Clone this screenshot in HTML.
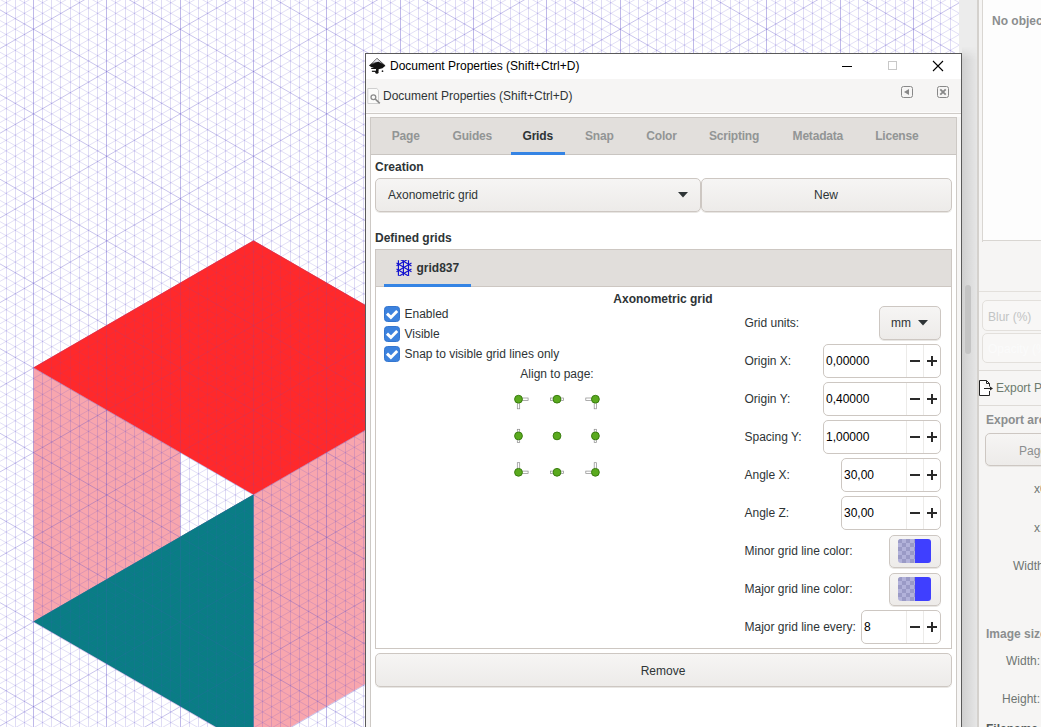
<!DOCTYPE html>
<html><head><meta charset="utf-8"><style>
*{margin:0;padding:0;box-sizing:border-box}
html,body{width:1041px;height:727px;overflow:hidden;background:#fff;font-family:"Liberation Sans",sans-serif;font-size:12px;color:#2e3436}
.a{position:absolute}
.t{position:absolute;line-height:12px;white-space:nowrap}
.b{font-weight:bold}
.c{transform:translateX(-50%)}
.btn{position:absolute;border:1px solid #cdc7c2;border-radius:5px;background:linear-gradient(#f6f5f4,#edebe9);box-shadow:0 1px #e8e6e3}
.ent{position:absolute;border:1px solid #cdc7c2;border-radius:5px;background:#fff}
.sep{position:absolute;top:1px;bottom:1px;width:1px;background:#ebe8e5}
.tab{position:absolute;line-height:12px;white-space:nowrap;font-weight:bold;color:#929595;transform:translateX(-50%);letter-spacing:-0.2px}
.lbl{position:absolute;line-height:12px;white-space:nowrap;color:#8b8e8f}
</style></head><body>
<div style="position:absolute;left:0;top:0;width:959px;height:727px;"><svg width="959" height="727" style="position:absolute;left:0;top:0">
<rect width="959" height="727" fill="#fff"/>
<polygon points="33.50,367.40 253.50,494.42 253.50,748.46 33.50,621.44" fill="#f8a6ae"/>
<polygon points="253.50,494.42 473.50,367.40 473.50,621.44 253.50,748.46" fill="#f8a6ae"/>
<polygon points="180.17,452.08 253.50,494.42 180.17,536.76" fill="#ffffff"/>
<polygon points="33.50,621.44 253.50,494.42 253.50,748.46" fill="#0a7d86"/>
<polygon points="253.50,240.38 473.50,367.40 253.50,494.42 33.50,367.40" fill="#ff2a2c"/>

<g>
<path d="M0 -551.15L959 2.55M0 -540.56L959 13.13M0 -529.98L959 23.72M0 -519.39L959 34.30M0 -508.81L959 44.89M0 -487.64L959 66.06M0 -477.05L959 76.64M0 -466.47L959 87.23M0 -455.88L959 97.81M0 -445.30L959 108.40M0 -434.71L959 118.98M0 -424.13L959 129.57M0 -402.96L959 150.74M0 -392.37L959 161.32M0 -381.79L959 171.91M0 -371.20L959 182.49M0 -360.62L959 193.08M0 -350.03L959 203.66M0 -339.45L959 214.25M0 -318.28L959 235.42M0 -307.69L959 246.00M0 -297.11L959 256.59M0 -286.52L959 267.17M0 -275.94L959 277.76M0 -265.35L959 288.34M0 -254.77L959 298.93M0 -233.60L959 320.10M0 -223.01L959 330.68M0 -212.43L959 341.27M0 -201.84L959 351.85M0 -191.26L959 362.44M0 -180.67L959 373.02M0 -170.09L959 383.61M0 -148.92L959 404.78M0 -138.33L959 415.36M0 -127.75L959 425.95M0 -117.16L959 436.53M0 -106.58L959 447.12M0 -95.99L959 457.70M0 -85.41L959 468.29M0 -64.24L959 489.46M0 -53.65L959 500.04M0 -43.07L959 510.63M0 -32.48L959 521.21M0 -21.90L959 531.80M0 -11.31L959 542.38M0 -0.73L959 552.97M0 20.44L959 574.14M0 31.03L959 584.72M0 41.61L959 595.31M0 52.20L959 605.89M0 62.78L959 616.48M0 73.37L959 627.06M0 83.95L959 637.65M0 105.12L959 658.82M0 115.71L959 669.40M0 126.29L959 679.99M0 136.88L959 690.57M0 147.46L959 701.16M0 158.05L959 711.74M0 168.63L959 722.33M0 189.80L959 743.50M0 200.39L959 754.08M0 210.97L959 764.67M0 221.56L959 775.25M0 232.14L959 785.84M0 242.73L959 796.42M0 253.31L959 807.01M0 274.48L959 828.18M0 285.07L959 838.76M0 295.65L959 849.35M0 306.24L959 859.93M0 316.82L959 870.52M0 327.41L959 881.10M0 337.99L959 891.69M0 359.16L959 912.86M0 369.75L959 923.44M0 380.33L959 934.03M0 390.92L959 944.61M0 401.50L959 955.20M0 412.09L959 965.78M0 422.67L959 976.37M0 443.84L959 997.54M0 454.43L959 1008.12M0 465.01L959 1018.71M0 475.60L959 1029.29M0 486.18L959 1039.88M0 496.77L959 1050.46M0 507.35L959 1061.05M0 528.52L959 1082.22M0 539.11L959 1092.80M0 549.69L959 1103.39M0 560.28L959 1113.97M0 570.86L959 1124.56M0 581.45L959 1135.14M0 592.03L959 1145.73M0 613.20L959 1166.90M0 623.79L959 1177.48M0 634.37L959 1188.07M0 644.96L959 1198.65M0 655.54L959 1209.24M0 666.13L959 1219.82M0 676.71L959 1230.41M0 697.88L959 1251.58M0 708.47L959 1262.16M0 719.05L959 1272.75M0 6.20L959 -547.49M0 16.79L959 -536.91M0 27.37L959 -526.32M0 37.96L959 -515.74M0 59.13L959 -494.57M0 69.71L959 -483.98M0 80.30L959 -473.40M0 90.88L959 -462.81M0 101.47L959 -452.23M0 112.05L959 -441.64M0 122.64L959 -431.06M0 143.81L959 -409.89M0 154.39L959 -399.30M0 164.98L959 -388.72M0 175.56L959 -378.13M0 186.15L959 -367.55M0 196.73L959 -356.96M0 207.32L959 -346.38M0 228.49L959 -325.21M0 239.07L959 -314.62M0 249.66L959 -304.04M0 260.24L959 -293.45M0 270.83L959 -282.87M0 281.41L959 -272.28M0 292.00L959 -261.70M0 313.17L959 -240.53M0 323.75L959 -229.94M0 334.34L959 -219.36M0 344.92L959 -208.77M0 355.51L959 -198.19M0 366.09L959 -187.60M0 376.68L959 -177.02M0 397.85L959 -155.85M0 408.43L959 -145.26M0 419.02L959 -134.68M0 429.60L959 -124.09M0 440.19L959 -113.51M0 450.77L959 -102.92M0 461.36L959 -92.34M0 482.53L959 -71.17M0 493.11L959 -60.58M0 503.70L959 -50.00M0 514.28L959 -39.41M0 524.87L959 -28.83M0 535.45L959 -18.24M0 546.04L959 -7.66M0 567.21L959 13.51M0 577.79L959 24.10M0 588.38L959 34.68M0 598.96L959 45.27M0 609.55L959 55.85M0 620.13L959 66.44M0 630.72L959 77.02M0 651.89L959 98.19M0 662.47L959 108.78M0 673.06L959 119.36M0 683.64L959 129.95M0 694.23L959 140.53M0 704.81L959 151.12M0 715.40L959 161.70M0 736.57L959 182.87M0 747.15L959 193.46M0 757.74L959 204.04M0 768.32L959 214.63M0 778.91L959 225.21M0 789.49L959 235.80M0 800.08L959 246.38M0 821.25L959 267.55M0 831.83L959 278.14M0 842.42L959 288.72M0 853.00L959 299.31M0 863.59L959 309.89M0 874.17L959 320.48M0 884.76L959 331.06M0 905.93L959 352.23M0 916.51L959 362.82M0 927.10L959 373.40M0 937.68L959 383.99M0 948.27L959 394.57M0 958.85L959 405.16M0 969.44L959 415.74M0 990.61L959 436.91M0 1001.19L959 447.50M0 1011.78L959 458.08M0 1022.36L959 468.67M0 1032.95L959 479.25M0 1043.53L959 489.84M0 1054.12L959 500.42M0 1075.29L959 521.59M0 1085.87L959 532.18M0 1096.46L959 542.76M0 1107.04L959 553.35M0 1117.63L959 563.93M0 1128.21L959 574.52M0 1138.80L959 585.10M0 1159.97L959 606.27M0 1170.55L959 616.86M0 1181.14L959 627.44M0 1191.72L959 638.03M0 1202.31L959 648.61M0 1212.89L959 659.20M0 1223.48L959 669.78M0 1244.65L959 690.95M0 1255.23L959 701.54M0 1265.82L959 712.12M0 1276.40L959 722.71" stroke="rgb(95,80,205)" stroke-opacity="0.18" stroke-width="1" fill="none"/>
<path d="M6.50 0V727M15.50 0V727M24.50 0V727M42.50 0V727M51.50 0V727M60.50 0V727M70.50 0V727M79.50 0V727M88.50 0V727M97.50 0V727M115.50 0V727M125.50 0V727M134.50 0V727M143.50 0V727M152.50 0V727M161.50 0V727M170.50 0V727M189.50 0V727M198.50 0V727M207.50 0V727M216.50 0V727M225.50 0V727M235.50 0V727M244.50 0V727M262.50 0V727M271.50 0V727M280.50 0V727M290.50 0V727M299.50 0V727M308.50 0V727M317.50 0V727M335.50 0V727M345.50 0V727M354.50 0V727M363.50 0V727M372.50 0V727M381.50 0V727M390.50 0V727M409.50 0V727M418.50 0V727M427.50 0V727M436.50 0V727M445.50 0V727M455.50 0V727M464.50 0V727M482.50 0V727M491.50 0V727M500.50 0V727M510.50 0V727M519.50 0V727M528.50 0V727M537.50 0V727M555.50 0V727M565.50 0V727M574.50 0V727M583.50 0V727M592.50 0V727M601.50 0V727M610.50 0V727M629.50 0V727M638.50 0V727M647.50 0V727M656.50 0V727M665.50 0V727M675.50 0V727M684.50 0V727M702.50 0V727M711.50 0V727M720.50 0V727M730.50 0V727M739.50 0V727M748.50 0V727M757.50 0V727M775.50 0V727M785.50 0V727M794.50 0V727M803.50 0V727M812.50 0V727M821.50 0V727M830.50 0V727M849.50 0V727M858.50 0V727M867.50 0V727M876.50 0V727M885.50 0V727M895.50 0V727M904.50 0V727M922.50 0V727M931.50 0V727M940.50 0V727M950.50 0V727M959.50 0V727" stroke="rgb(95,80,205)" stroke-opacity="0.2" stroke-width="1" fill="none"/>
<path d="M0 -498.22L959 55.47M0 -413.54L959 140.15M0 -328.86L959 224.83M0 -244.18L959 309.51M0 -159.50L959 394.19M0 -74.82L959 478.87M0 9.86L959 563.55M0 94.54L959 648.23M0 179.22L959 732.91M0 263.90L959 817.59M0 348.58L959 902.27M0 433.26L959 986.95M0 517.94L959 1071.63M0 602.62L959 1156.31M0 687.30L959 1240.99M0 48.54L959 -505.15M0 133.22L959 -420.47M0 217.90L959 -335.79M0 302.58L959 -251.11M0 387.26L959 -166.43M0 471.94L959 -81.75M0 556.62L959 2.93M0 641.30L959 87.61M0 725.98L959 172.29M0 810.66L959 256.97M0 895.34L959 341.65M0 980.02L959 426.33M0 1064.70L959 511.01M0 1149.38L959 595.69M0 1234.06L959 680.37" stroke="rgb(95,80,200)" stroke-opacity="0.34" stroke-width="1" fill="none"/>
<path d="M33.50 0V727M106.50 0V727M180.50 0V727M253.50 0V727M326.50 0V727M400.50 0V727M473.50 0V727M546.50 0V727M620.50 0V727M693.50 0V727M766.50 0V727M840.50 0V727M913.50 0V727" stroke="rgb(95,80,200)" stroke-opacity="0.4" stroke-width="1" fill="none"/></g>
<polygon points="33.50,621.44 253.50,494.42 253.50,748.46" fill="#0a7d86" fill-opacity="0.6"/>
<polygon points="253.50,240.38 473.50,367.40 253.50,494.42 33.50,367.40" fill="#ff2a2c" fill-opacity="0.6"/>

</svg></div>
<!-- canvas scrollbar strip -->
<div class="a" style="left:959px;top:0;width:18px;height:727px;background:#ececec"></div>
<div class="a" style="left:962px;top:47px;width:15px;height:680px;background:linear-gradient(90deg,#d0d0d0,#e6e6e6);-webkit-mask-image:linear-gradient(to bottom,transparent,#000 12px)"></div>
<div class="a" style="left:965px;top:285px;width:6px;height:69px;border-radius:3px;background:#c4c4c4"></div>
<!-- right dock -->
<div class="a" style="left:977px;top:0;width:64px;height:727px;background:#f6f5f4"></div>
<div class="a" style="left:977px;top:0;width:2px;height:727px;background:#d4d1cd"></div>
<div class="a" style="left:982px;top:0;width:1px;height:242px;background:#d9d6d2"></div>
<div class="a" style="left:983px;top:0;width:58px;height:241px;background:#fdfdfd;border-bottom:1px solid #d9d6d2"></div>
<div class="t b" style="left:992px;top:15px;color:#8b8e8f">No objects selected</div>
<div class="a" style="left:979px;top:291px;width:62px;height:1px;background:#e3e0dc"></div>
<div class="ent" style="left:982px;top:300px;width:70px;height:31px;background:#f8f7f6;border-color:#e3e0dc"></div>
<div class="t" style="left:988px;top:311px;color:#c2c4c4">Blur (%)</div>
<div class="ent" style="left:982px;top:333px;width:70px;height:30px;background:#f8f7f6;border-color:#e3e0dc"></div>
<div class="t" style="left:988px;top:343px;color:#fbfbfb">Opacity (%)</div>
<div class="a" style="left:979px;top:370px;width:62px;height:1px;background:#dedbd7"></div>
<svg class="a" style="left:978px;top:380px" width="16" height="16" viewBox="0 0 16 16"><path d="M1.5 0.5h7l3 3v3M11.5 11v4.5h-10v-15" fill="#fff" stroke="#222" stroke-width="1"/><path d="M8.5 0.5v3h3" fill="none" stroke="#222"/><path d="M6 8.5h8" stroke="#222"/><path d="M12 6.5l3 2-3 2z" fill="#222"/></svg>
<div class="t" style="left:996px;top:382px;color:#6d7b6e">Export PNG Image</div>
<div class="a" style="left:979px;top:405px;width:62px;height:1px;background:#dedbd7"></div>
<div class="t b" style="left:986px;top:414px;color:#8b8e8f">Export area</div>
<div class="btn" style="left:985px;top:433px;width:70px;height:33px"></div>
<div class="t" style="left:1019px;top:445px;color:#8b8e8f">Page</div>
<div class="t" style="left:1034px;top:483px;color:#6f7573">x0</div>
<div class="t" style="left:1034px;top:522px;color:#6f7573">x1</div>
<div class="t" style="left:1013px;top:560px;color:#6f7573">Width:</div>
<div class="t b" style="left:986px;top:628px;color:#8b8e8f">Image size</div>
<div class="t" style="left:1006px;top:655px;color:#6f7573">Width:</div>
<div class="t" style="left:1002px;top:693px;color:#6f7573">Height:</div>
<div class="t b" style="left:986px;top:723px;color:#555b5a">Filename</div>

<!-- dialog -->
<div class="a" style="left:365px;top:53px;width:597px;height:700px;background:#f6f5f4;border:1px solid #5a5a5a"></div>
<div class="a" style="left:366px;top:54px;width:595px;height:25px;background:#fff"></div>
<svg class="a" style="left:366px;top:55px" width="24" height="24" viewBox="0 0 24 24">
<defs><linearGradient id="ig" x1="0" y1="0" x2="0" y2="1"><stop offset="0" stop-color="#fff"/><stop offset="0.35" stop-color="#d8d8e0"/><stop offset="0.6" stop-color="#222"/><stop offset="1" stop-color="#111"/></linearGradient></defs>
<path d="M11 3.3L3.3 10.6 5 12 10 12.8 14 13 17 12 19.2 10.7z" fill="url(#ig)"/>
<path d="M11 3.3L3.3 10.6" stroke="#1a1a1a" stroke-width="0.9" stroke-dasharray="0.9 0.7" fill="none"/>
<path d="M11 3.3L19.2 10.7" stroke="#2a2a2a" stroke-width="0.7" fill="none"/>
<path d="M4.8 11.2L9.5 7.5 12.5 6.8 19.2 10.7 16.5 13.3 12.5 14.2 9 13.6z" fill="#121212"/>
<rect x="5.2" y="12.8" width="5" height="1.2" fill="#111"/>
<rect x="5.9" y="15.7" width="4.8" height="1.2" fill="#111"/>
<circle cx="10.9" cy="17.2" r="1.6" fill="#111"/>
<rect x="10" y="13.5" width="2.6" height="3" fill="#111"/>
<circle cx="16.5" cy="16.2" r="0.85" fill="#222"/>
</svg>
<div class="t" style="left:390px;top:60px;color:#000">Document Properties (Shift+Ctrl+D)</div>
<div class="a" style="left:842px;top:66px;width:10px;height:1px;background:#000"></div>
<div class="a" style="left:888px;top:61px;width:9px;height:9px;border:1px solid #c8c8c8"></div>
<svg class="a" style="left:932px;top:60px" width="12" height="12" viewBox="0 0 12 12"><path d="M1 1L11 11M11 1L1 11" stroke="#000" stroke-width="1.1"/></svg>

<svg class="a" style="left:364px;top:84px" width="24" height="24" viewBox="0 0 24 24">
<path d="M3.8 4.5h9l1.7 1.7v13.3h-10.7z" fill="#fbfbfa" stroke="#cfcfcf" stroke-width="1"/>
<circle cx="9.4" cy="13.2" r="2.4" fill="none" stroke="#8c8c8c" stroke-width="1.3"/>
<path d="M11.2 15l4.6 4.4" stroke="#8c8c8c" stroke-width="1.7"/>
</svg>
<div class="t" style="left:383px;top:90px;color:#2e3436">Document Properties (Shift+Ctrl+D)</div>
<svg class="a" style="left:901px;top:86px" width="12" height="12" viewBox="0 0 12 12"><rect x="0.5" y="0.5" width="11" height="11" rx="2" fill="none" stroke="#888"/><path d="M3 6l5-3v6z" fill="#888"/></svg>
<svg class="a" style="left:937px;top:86px" width="12" height="12" viewBox="0 0 12 12"><rect x="0.5" y="0.5" width="11" height="11" rx="2" fill="none" stroke="#888"/><path d="M3.3 3.3l5.4 5.4M8.7 3.3l-5.4 5.4" stroke="#888" stroke-width="1.8"/></svg>
<div class="a" style="left:366px;top:112px;width:595px;height:5px;background:#fcfbfa;border-top:1px solid #fcfbfa"></div><div class="a" style="left:366px;top:113px;width:595px;height:1px;background:#cfcbc7"></div>

<!-- outer notebook -->
<div class="a" style="left:370px;top:117px;width:587px;height:620px;background:#fff;border:1px solid #cdc9c5"></div>
<div class="a" style="left:371px;top:118px;width:585px;height:37px;background:#e2dfdc;border-bottom:1px solid #c9c5c1"></div>
<div class="tab" style="left:405.7px;top:130px">Page</div>
<div class="tab" style="left:472.3px;top:130px">Guides</div>
<div class="tab" style="left:537.7px;top:130px;color:#2e3436">Grids</div>
<div class="tab" style="left:599.3px;top:130px">Snap</div>
<div class="tab" style="left:661.5px;top:130px">Color</div>
<div class="tab" style="left:734px;top:130px">Scripting</div>
<div class="tab" style="left:817.8px;top:130px">Metadata</div>
<div class="tab" style="left:896.8px;top:130px">License</div>
<div class="a" style="left:511px;top:152px;width:54px;height:3px;background:#3584e4"></div>

<div class="t b" style="left:375px;top:161px">Creation</div>
<div class="btn" style="left:375px;top:178px;width:326px;height:34px"></div>
<div class="t" style="left:388px;top:189px">Axonometric grid</div>
<svg class="a" style="left:678px;top:192px" width="10" height="6" viewBox="0 0 10 6"><path d="M0 0h10L5 5.5z" fill="#2e3436"/></svg>
<div class="btn" style="left:701px;top:178px;width:251px;height:34px"></div>
<div class="t c" style="left:826px;top:189px">New</div>
<div class="t b" style="left:375px;top:232px">Defined grids</div>

<!-- inner notebook -->
<div class="a" style="left:375px;top:249px;width:577px;height:400px;background:#fff;border:1px solid #cdc7c2"></div>
<div class="a" style="left:376px;top:250px;width:575px;height:37px;background:#e1dedb;border-bottom:1px solid #cdc7c2"></div>
<svg class="a" style="left:396px;top:260px" width="16" height="16" viewBox="0 0 16 16">
<defs><clipPath id="gc"><rect x="0" y="0" width="16" height="16"/></clipPath></defs>
<g stroke="#1010d0" stroke-width="1.15" fill="none" clip-path="url(#gc)">
<path d="M2.4 0.3V15.8M7.4 0.3V15.8M12.5 0.3V15.8"/>
<path d="M0.5 3.1L15.5 11.8M0.5 -2.8L15.5 5.9M0.5 9L15.5 17.7"/>
<path d="M0.5 11.7L15.5 3M0.5 5.8L15.5 -2.9M0.5 17.6L15.5 8.9"/>
</g></svg>
<div class="t b" style="left:416.5px;top:262px">grid837</div>
<div class="a" style="left:384px;top:284px;width:87px;height:3px;background:#3584e4"></div>

<!-- checkboxes -->
<svg class="a" style="left:384px;top:306px" width="16" height="16" viewBox="0 0 16 16"><rect x="0.5" y="0.5" width="15" height="15" rx="3" fill="#3c82de" stroke="#3476cf"/><path d="M3 7.6L6.9 11.4 13.2 5" fill="none" stroke="#fff" stroke-width="2.9"/></svg><div class="t" style="left:404.5px;top:308px">Enabled</div><svg class="a" style="left:384px;top:326px" width="16" height="16" viewBox="0 0 16 16"><rect x="0.5" y="0.5" width="15" height="15" rx="3" fill="#3c82de" stroke="#3476cf"/><path d="M3 7.6L6.9 11.4 13.2 5" fill="none" stroke="#fff" stroke-width="2.9"/></svg><div class="t" style="left:404.5px;top:328px">Visible</div><svg class="a" style="left:384px;top:346px" width="16" height="16" viewBox="0 0 16 16"><rect x="0.5" y="0.5" width="15" height="15" rx="3" fill="#3c82de" stroke="#3476cf"/><path d="M3 7.6L6.9 11.4 13.2 5" fill="none" stroke="#fff" stroke-width="2.9"/></svg><div class="t" style="left:404.5px;top:348px">Snap to visible grid lines only</div><svg class="a" style="left:0;top:0" width="1041" height="727"><rect x="521.5" y="398.0" width="6.6" height="2.4" fill="#fff" stroke="#8a8a8a" stroke-width="0.7"/><rect x="517.3" y="402.2" width="2.4" height="6.6" fill="#fff" stroke="#8a8a8a" stroke-width="0.7"/><circle cx="518.5" cy="399.2" r="3.9" fill="#5aaa1e" stroke="#3a7d10" stroke-width="1"/><rect x="550.4" y="398.0" width="3.6" height="2.4" fill="#fff" stroke="#8a8a8a" stroke-width="0.7"/><rect x="560.0" y="398.0" width="3.6" height="2.4" fill="#fff" stroke="#8a8a8a" stroke-width="0.7"/><circle cx="557.0" cy="399.2" r="3.9" fill="#5aaa1e" stroke="#3a7d10" stroke-width="1"/><rect x="585.8" y="398.0" width="6.6" height="2.4" fill="#fff" stroke="#8a8a8a" stroke-width="0.7"/><rect x="594.2" y="402.2" width="2.4" height="6.6" fill="#fff" stroke="#8a8a8a" stroke-width="0.7"/><circle cx="595.4" cy="399.2" r="3.9" fill="#5aaa1e" stroke="#3a7d10" stroke-width="1"/><rect x="517.3" y="429.3" width="2.4" height="3.6" fill="#fff" stroke="#8a8a8a" stroke-width="0.7"/><rect x="517.3" y="438.9" width="2.4" height="3.6" fill="#fff" stroke="#8a8a8a" stroke-width="0.7"/><circle cx="518.5" cy="435.9" r="3.9" fill="#5aaa1e" stroke="#3a7d10" stroke-width="1"/><circle cx="557.0" cy="435.9" r="3.9" fill="#5aaa1e" stroke="#3a7d10" stroke-width="1"/><rect x="594.2" y="429.3" width="2.4" height="3.6" fill="#fff" stroke="#8a8a8a" stroke-width="0.7"/><rect x="594.2" y="438.9" width="2.4" height="3.6" fill="#fff" stroke="#8a8a8a" stroke-width="0.7"/><circle cx="595.4" cy="435.9" r="3.9" fill="#5aaa1e" stroke="#3a7d10" stroke-width="1"/><rect x="517.3" y="462.7" width="2.4" height="6.6" fill="#fff" stroke="#8a8a8a" stroke-width="0.7"/><rect x="521.5" y="471.1" width="6.6" height="2.4" fill="#fff" stroke="#8a8a8a" stroke-width="0.7"/><circle cx="518.5" cy="472.3" r="3.9" fill="#5aaa1e" stroke="#3a7d10" stroke-width="1"/><rect x="550.4" y="471.1" width="3.6" height="2.4" fill="#fff" stroke="#8a8a8a" stroke-width="0.7"/><rect x="560.0" y="471.1" width="3.6" height="2.4" fill="#fff" stroke="#8a8a8a" stroke-width="0.7"/><circle cx="557.0" cy="472.3" r="3.9" fill="#5aaa1e" stroke="#3a7d10" stroke-width="1"/><rect x="594.2" y="462.7" width="2.4" height="6.6" fill="#fff" stroke="#8a8a8a" stroke-width="0.7"/><rect x="585.8" y="471.1" width="6.6" height="2.4" fill="#fff" stroke="#8a8a8a" stroke-width="0.7"/><circle cx="595.4" cy="472.3" r="3.9" fill="#5aaa1e" stroke="#3a7d10" stroke-width="1"/></svg><div class="t" style="left:744.5px;top:317px">Grid units:</div><div class="t" style="left:744.5px;top:355px">Origin X:</div><div class="t" style="left:744.5px;top:393px">Origin Y:</div><div class="t" style="left:744.5px;top:431px">Spacing Y:</div><div class="t" style="left:744.5px;top:469px">Angle X:</div><div class="t" style="left:744.5px;top:507px">Angle Z:</div><div class="t" style="left:744.5px;top:545px">Minor grid line color:</div><div class="t" style="left:744.5px;top:583px">Major grid line color:</div><div class="t" style="left:744.5px;top:621px">Major grid line every:</div><div class="btn" style="left:879px;top:306px;width:62px;height:34px"></div><div class="t" style="left:891px;top:317px">mm</div><svg class="a" style="left:918px;top:320px" width="10" height="6" viewBox="0 0 10 6"><path d="M0 0h10L5 5.5z" fill="#2e3436"/></svg><div class="ent" style="left:823px;top:344px;width:118px;height:34px"></div><div class="a" style="left:906px;top:345px;width:1px;height:32px;background:#ecebe9"></div><div class="a" style="left:923px;top:345px;width:1px;height:32px;background:#ecebe9"></div><div class="t" style="left:826px;top:355px;color:#000">0,00000</div><div class="a" style="left:910px;top:360px;width:10px;height:2px;background:#2a2a2a"></div><div class="a" style="left:927px;top:360px;width:10px;height:2px;background:#2a2a2a"></div><div class="a" style="left:931px;top:356px;width:2px;height:10px;background:#2a2a2a"></div><div class="ent" style="left:823px;top:382px;width:118px;height:34px"></div><div class="a" style="left:906px;top:383px;width:1px;height:32px;background:#ecebe9"></div><div class="a" style="left:923px;top:383px;width:1px;height:32px;background:#ecebe9"></div><div class="t" style="left:826px;top:393px;color:#000">0,40000</div><div class="a" style="left:910px;top:398px;width:10px;height:2px;background:#2a2a2a"></div><div class="a" style="left:927px;top:398px;width:10px;height:2px;background:#2a2a2a"></div><div class="a" style="left:931px;top:394px;width:2px;height:10px;background:#2a2a2a"></div><div class="ent" style="left:823px;top:420px;width:118px;height:34px"></div><div class="a" style="left:906px;top:421px;width:1px;height:32px;background:#ecebe9"></div><div class="a" style="left:923px;top:421px;width:1px;height:32px;background:#ecebe9"></div><div class="t" style="left:826px;top:431px;color:#000">1,00000</div><div class="a" style="left:910px;top:436px;width:10px;height:2px;background:#2a2a2a"></div><div class="a" style="left:927px;top:436px;width:10px;height:2px;background:#2a2a2a"></div><div class="a" style="left:931px;top:432px;width:2px;height:10px;background:#2a2a2a"></div><div class="ent" style="left:841px;top:458px;width:100px;height:34px"></div><div class="a" style="left:906px;top:459px;width:1px;height:32px;background:#ecebe9"></div><div class="a" style="left:923px;top:459px;width:1px;height:32px;background:#ecebe9"></div><div class="t" style="left:844px;top:469px;color:#000">30,00</div><div class="a" style="left:910px;top:474px;width:10px;height:2px;background:#2a2a2a"></div><div class="a" style="left:927px;top:474px;width:10px;height:2px;background:#2a2a2a"></div><div class="a" style="left:931px;top:470px;width:2px;height:10px;background:#2a2a2a"></div><div class="ent" style="left:841px;top:496px;width:100px;height:34px"></div><div class="a" style="left:906px;top:497px;width:1px;height:32px;background:#ecebe9"></div><div class="a" style="left:923px;top:497px;width:1px;height:32px;background:#ecebe9"></div><div class="t" style="left:844px;top:507px;color:#000">30,00</div><div class="a" style="left:910px;top:512px;width:10px;height:2px;background:#2a2a2a"></div><div class="a" style="left:927px;top:512px;width:10px;height:2px;background:#2a2a2a"></div><div class="a" style="left:931px;top:508px;width:2px;height:10px;background:#2a2a2a"></div><div class="ent" style="left:861px;top:610px;width:80px;height:34px"></div><div class="a" style="left:906px;top:611px;width:1px;height:32px;background:#ecebe9"></div><div class="a" style="left:923px;top:611px;width:1px;height:32px;background:#ecebe9"></div><div class="t" style="left:864px;top:621px;color:#000">8</div><div class="a" style="left:910px;top:626px;width:10px;height:2px;background:#2a2a2a"></div><div class="a" style="left:927px;top:626px;width:10px;height:2px;background:#2a2a2a"></div><div class="a" style="left:931px;top:622px;width:2px;height:10px;background:#2a2a2a"></div><div class="btn" style="left:889px;top:534.5px;width:52px;height:33px"></div><svg class="a" style="left:898px;top:539.0px" width="33" height="24" viewBox="0 0 33 24"><defs><clipPath id="cp6"><rect width="33" height="24" rx="3"/></clipPath></defs><g clip-path="url(#cp6)"><rect width="17" height="24" fill="#b2b2da"/><rect x="0" y="0" width="4" height="4" fill="#9a9ac6"/><rect x="0" y="8" width="4" height="4" fill="#9a9ac6"/><rect x="0" y="16" width="4" height="4" fill="#9a9ac6"/><rect x="4" y="4" width="4" height="4" fill="#9a9ac6"/><rect x="4" y="12" width="4" height="4" fill="#9a9ac6"/><rect x="4" y="20" width="4" height="4" fill="#9a9ac6"/><rect x="8" y="0" width="4" height="4" fill="#9a9ac6"/><rect x="8" y="8" width="4" height="4" fill="#9a9ac6"/><rect x="8" y="16" width="4" height="4" fill="#9a9ac6"/><rect x="12" y="4" width="4" height="4" fill="#9a9ac6"/><rect x="12" y="12" width="4" height="4" fill="#9a9ac6"/><rect x="12" y="20" width="4" height="4" fill="#9a9ac6"/><rect x="16" y="0" width="4" height="4" fill="#9a9ac6"/><rect x="16" y="8" width="4" height="4" fill="#9a9ac6"/><rect x="16" y="16" width="4" height="4" fill="#9a9ac6"/><rect x="17" width="16" height="24" fill="#3f3fff"/></g></svg><div class="btn" style="left:889px;top:572.5px;width:52px;height:33px"></div><svg class="a" style="left:898px;top:577.0px" width="33" height="24" viewBox="0 0 33 24"><defs><clipPath id="cp7"><rect width="33" height="24" rx="3"/></clipPath></defs><g clip-path="url(#cp7)"><rect width="17" height="24" fill="#b2b2da"/><rect x="0" y="0" width="4" height="4" fill="#9a9ac6"/><rect x="0" y="8" width="4" height="4" fill="#9a9ac6"/><rect x="0" y="16" width="4" height="4" fill="#9a9ac6"/><rect x="4" y="4" width="4" height="4" fill="#9a9ac6"/><rect x="4" y="12" width="4" height="4" fill="#9a9ac6"/><rect x="4" y="20" width="4" height="4" fill="#9a9ac6"/><rect x="8" y="0" width="4" height="4" fill="#9a9ac6"/><rect x="8" y="8" width="4" height="4" fill="#9a9ac6"/><rect x="8" y="16" width="4" height="4" fill="#9a9ac6"/><rect x="12" y="4" width="4" height="4" fill="#9a9ac6"/><rect x="12" y="12" width="4" height="4" fill="#9a9ac6"/><rect x="12" y="20" width="4" height="4" fill="#9a9ac6"/><rect x="16" y="0" width="4" height="4" fill="#9a9ac6"/><rect x="16" y="8" width="4" height="4" fill="#9a9ac6"/><rect x="16" y="16" width="4" height="4" fill="#9a9ac6"/><rect x="17" width="16" height="24" fill="#3f3fff"/></g></svg><div class="btn" style="left:375px;top:653px;width:577px;height:34px"></div><div class="t c" style="left:663px;top:665px">Remove</div>
<div class="t b c" style="left:663px;top:293px">Axonometric grid</div>
<div class="t c" style="left:557px;top:368px">Align to page:</div>

</body></html>
